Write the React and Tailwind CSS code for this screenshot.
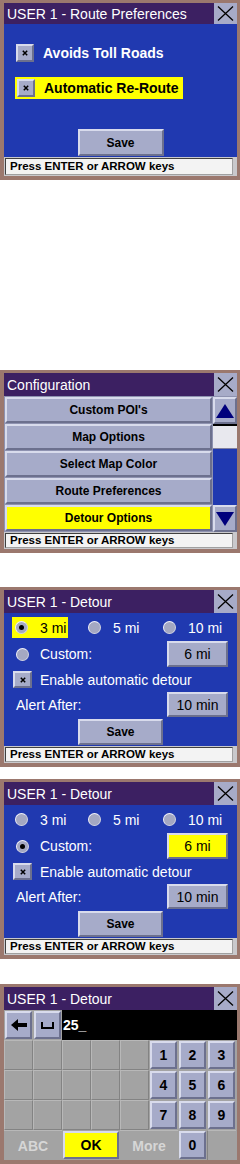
const bevel =
  "border-2 border-t-[#d8dbec] border-l-[#d8dbec] border-r-[#6c708e] border-b-[#6c708e]";

function Frame({ children }) {
  return (
    <div className="w-[240px] bg-[#9b786e] pl-[4px] pr-[3px] pt-[3px] pb-[4px] flex flex-col">
      {children}
    </div>
  );
}

function Title({ text, h }) {
  return (
    <div className={`flex bg-[#3c2062] ${h}`}>
      <div className="flex-1 flex items-center pl-[3px] text-white text-[14px] leading-none">
        {text}
      </div>
      <div className="w-[23px] bg-[#a7abc8] flex items-center justify-center">
        <svg width="23" height="21" viewBox="0 0 23 21">
          <path d="M4 3.5L19 17.5M19 3.5L4 17.5" stroke="#000" strokeWidth="1.3" fill="none" />
        </svg>
      </div>
    </div>
  );
}

function Status({ h }) {
  return (
    <div className={`${h} bg-[#c9c9cc] pl-[1px] pr-[4px] py-[1px] flex`}>
      <div className="flex-1 bg-[#f3f3f3] border border-t-[#404040] border-l-[#404040] border-r-[#a0a0a0] border-b-[#a0a0a0] flex items-center pl-[4px] text-[11.5px] font-bold text-black leading-none">
        Press ENTER or ARROW keys
      </div>
    </div>
  );
}

function Check({ w = "w-[18px]", h = "h-[18px]" }) {
  return (
    <div className={`${w} ${h} shrink-0 bg-[#a6abc9] ${bevel} flex items-center justify-center`}>
      <svg width="6" height="6" viewBox="0 0 6 6">
        <path d="M0.8 0.8L5.2 5.2M5.2 0.8L0.8 5.2" stroke="#000" strokeWidth="1.5" />
      </svg>
    </div>
  );
}

function Radio({ on }) {
  return (
    <div className="w-[13px] h-[13px] shrink-0 rounded-full bg-[#a4a8c2] border border-t-[#f0f0f8] border-l-[#f0f0f8] border-r-[#d0d2e0] border-b-[#d0d2e0] flex items-center justify-center">
      {on && <div className="w-[5px] h-[5px] rounded-full bg-black" />}
    </div>
  );
}

function ScreenRoute() {
  return (
    <Frame>
      <Title text="USER 1 - Route Preferences" h="h-[21px]" />
      <div className="h-[133px] bg-[#2039b0] flex flex-col">
        <div className="pt-[19px] pl-[11px]">
          <div className="h-[19px] flex items-center pl-[1px]">
            <Check />
            <span className="ml-[9px] text-white font-bold text-[14px] leading-none">
              Avoids Toll Roads
            </span>
          </div>
          <div className="mt-[15px] h-[22px] w-[168px] bg-[#ffff00] flex items-center pl-[2px]">
            <Check />
            <span className="ml-[9px] text-black font-bold text-[14px] leading-none">
              Automatic Re-Route
            </span>
          </div>
        </div>
        <div
          className={`mt-auto mb-[1px] self-center w-[86px] h-[27px] bg-[#a6abc9] ${bevel} flex items-center justify-center font-bold text-[12px] text-black`}
        >
          Save
        </div>
      </div>
      <Status h="h-[19px]" />
    </Frame>
  );
}

function ScreenConfig() {
  const items = ["Custom POI's", "Map Options", "Select Map Color", "Route Preferences", "Detour Options"];
  return (
    <Frame>
      <Title text="Configuration" h="h-[23px]" />
      <div className="h-[136px] bg-[#8e92b0] flex pt-[1px]">
        <div className="w-[208px] flex flex-col gap-[1px] pl-[1px]">
          {items.map((t, i) => (
            <div
              key={t}
              className={`h-[26px] ${i === 4 ? "bg-[#ffff00]" : "bg-[#a6abc9]"} ${bevel} flex items-center justify-center font-bold text-[12px] text-black leading-none`}
            >
              {t}
            </div>
          ))}
        </div>
        <div className="ml-[1px] w-[24px] flex flex-col">
          <div className={`h-[27px] bg-[#a6abc9] ${bevel} flex items-center justify-center`}>
            <svg width="18" height="14" viewBox="0 0 18 14">
              <path d="M9 0L18 14H0Z" fill="#00007c" />
            </svg>
          </div>
          <div className="flex-1 bg-[#2039b0] flex flex-col">
            <div className="h-[25px] border-t-[2px] border-black bg-[#e8e8ee] border-b border-b-[#8080a0]" />
          </div>
          <div className={`h-[27px] bg-[#a6abc9] ${bevel} flex items-center justify-center`}>
            <svg width="18" height="14" viewBox="0 0 18 14">
              <path d="M0 0H18L9 14Z" fill="#00007c" />
            </svg>
          </div>
        </div>
      </div>
      <Status h="h-[17px]" />
    </Frame>
  );
}

function ScreenDetour({ custom }) {
  const opts = [
    { t: "3 mi", w: "w-[73px]" },
    { t: "5 mi", w: "w-[75px]" },
    { t: "10 mi", w: "w-[70px]" },
  ];
  return (
    <Frame>
      <Title text="USER 1 - Detour" h="h-[23px]" />
      <div className="h-[133px] bg-[#2039b0] flex flex-col pt-[4px] text-[14px] leading-none">
        <div className="h-[21px] flex items-center pl-[8px]">
          {opts.map((o, i) => {
            const hl = !custom && i === 0;
            return (
              <div key={o.t} className={`${o.w} h-[21px] flex`}>
                <span
                  className={`inline-flex items-center h-[21px] pl-[3px] pr-[2px] ${hl ? "bg-[#ffff00] text-black" : "text-white"}`}
                >
                  <Radio on={hl} />
                  <span className="ml-[12px]">{o.t}</span>
                </span>
              </div>
            );
          })}
        </div>
        <div className="mt-[3px] h-[26px] flex items-center pl-[12px] pr-[9px]">
          <Radio on={custom} />
          <span className="ml-[11px] text-white">Custom:</span>
          <div
            className={`ml-auto w-[61px] h-[26px] ${custom ? "bg-[#ffff00]" : "bg-[#a6abc9]"} ${bevel} flex items-center justify-center text-black`}
          >
            6 mi
          </div>
        </div>
        <div className="mt-[4px] h-[17px] flex items-center pl-[9px]">
          <Check w="w-[19px]" h="h-[17px]" />
          <span className="ml-[8px] text-white">Enable automatic detour</span>
        </div>
        <div className="mt-[4px] h-[25px] flex items-center pl-[12px] pr-[9px]">
          <span className="text-white">Alert After:</span>
          <div
            className={`ml-auto w-[61px] h-[25px] bg-[#a6abc9] ${bevel} flex items-center justify-center text-black`}
          >
            10 min
          </div>
        </div>
        <div
          className={`mt-[2px] self-center w-[85px] h-[26px] bg-[#a6abc9] ${bevel} flex items-center justify-center font-bold text-[12px] text-black`}
        >
          Save
        </div>
      </div>
      <Status h="h-[17px]" />
    </Frame>
  );
}

function Empty() {
  return <div className="h-[30px] bg-[#a3a3a3] border-r border-b border-r-[#838383] border-b-[#838383] border-l border-t border-l-[#b8b8b8] border-t-[#b8b8b8]" />;
}

function Key({ children, yellow }) {
  return (
    <div className="h-[30px] bg-[#a3a3a3] p-[1px]">
      <div
        className={`h-full ${yellow ? "bg-[#ffff00]" : "bg-[#a6abc9]"} ${bevel} flex items-center justify-center font-bold text-[14px] text-black leading-none`}
      >
        {children}
      </div>
    </div>
  );
}

function ScreenKeypad() {
  const rows = [
    ["1", "2", "3"],
    ["4", "5", "6"],
    ["7", "8", "9"],
  ];
  return (
    <Frame>
      <Title text="USER 1 - Detour" h="h-[23px]" />
      <div className="h-[150px] bg-[#a3a3a3] flex flex-col">
        <div className="h-[30px] flex">
          <div className="w-[29px] p-[1px] pl-[1px]">
            <div className={`h-full bg-[#a6abc9] ${bevel} flex items-center justify-center`}>
              <svg width="16" height="12" viewBox="0 0 16 12">
                <path d="M0 6L7 0V4H16V8H7V12Z" fill="#000" />
              </svg>
            </div>
          </div>
          <div className="w-[29px] p-[1px]">
            <div className={`h-full bg-[#a6abc9] ${bevel} flex items-center justify-center`}>
              <svg width="13" height="7" viewBox="0 0 13 7">
                <path d="M1 0V6H12V0" stroke="#000" strokeWidth="2" fill="none" />
              </svg>
            </div>
          </div>
          <div className="flex-1 bg-black flex items-center pl-[1px] text-white font-bold text-[14px] leading-none">
            25_
          </div>
        </div>
        <div className="grid grid-cols-[repeat(8,29px)]">
          {rows.map((r) => (
            <>
              <Empty key={r[0] + "a"} />
              <Empty key={r[0] + "b"} />
              <Empty key={r[0] + "c"} />
              <Empty key={r[0] + "d"} />
              <Empty key={r[0] + "e"} />
              {r.map((k) => (
                <Key key={k}>{k}</Key>
              ))}
            </>
          ))}
          <div className="col-span-2 h-[30px] bg-[#a3a3a3] border-t border-t-[#b8b8b8] flex items-center justify-center font-bold text-[14px] text-[#d6d6d6] leading-none">
            ABC
          </div>
          <div className="col-span-2">
            <Key yellow>OK</Key>
          </div>
          <div className="col-span-2 h-[30px] bg-[#a3a3a3] border-t border-t-[#b8b8b8] flex items-center justify-center font-bold text-[14px] text-[#d6d6d6] leading-none">
            More
          </div>
          <Key>0</Key>
          <div className="h-[30px] bg-[#a3a3a3] border-t border-l border-t-[#b8b8b8] border-l-[#838383]" />
        </div>
      </div>
    </Frame>
  );
}

export default function App() {
  return (
    <div className="w-[240px] bg-white flex flex-col font-['Liberation_Sans',Arial,sans-serif]">
      <ScreenRoute />
      <div className="mt-[190px]">
        <ScreenConfig />
      </div>
      <div className="mt-[34px]">
        <ScreenDetour custom={false} />
      </div>
      <div className="mt-[12px]">
        <ScreenDetour custom={true} />
      </div>
      <div className="mt-[25px]">
        <ScreenKeypad />
      </div>
    </div>
  );
}
